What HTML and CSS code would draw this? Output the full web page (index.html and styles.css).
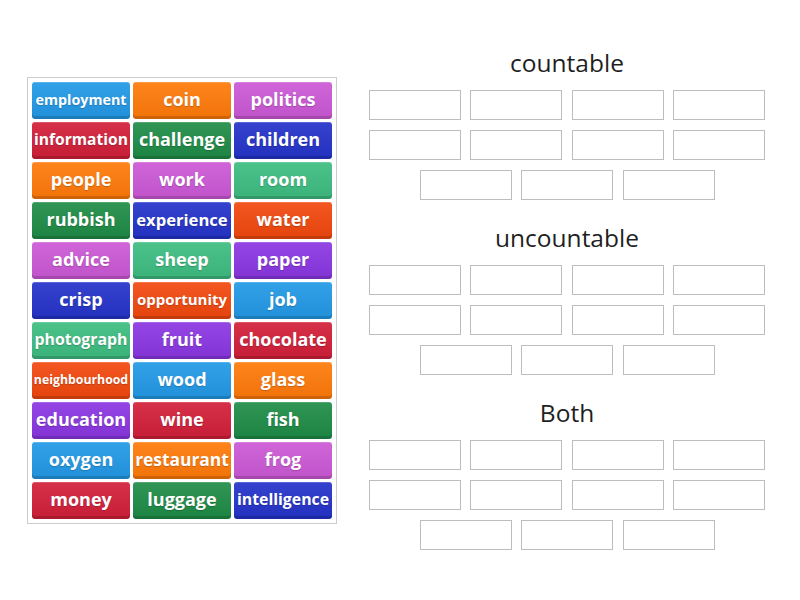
FILE: index.html
```html
<!DOCTYPE html>
<html>
<head>
<meta charset="utf-8">
<link rel="stylesheet" href="styles.css">
</head>
<body>
<div class="page">
  <div class="bank">
    <div class="tile blue s-employment">employment</div>
    <div class="tile orange">coin</div>
    <div class="tile magenta">politics</div>
    <div class="tile red s-information">information</div>
    <div class="tile green">challenge</div>
    <div class="tile dkblue">children</div>
    <div class="tile orange">people</div>
    <div class="tile magenta">work</div>
    <div class="tile teal">room</div>
    <div class="tile green">rubbish</div>
    <div class="tile dkblue s-experience">experience</div>
    <div class="tile orangered">water</div>
    <div class="tile magenta">advice</div>
    <div class="tile teal">sheep</div>
    <div class="tile violet">paper</div>
    <div class="tile dkblue">crisp</div>
    <div class="tile orangered s-opportunity">opportunity</div>
    <div class="tile blue">job</div>
    <div class="tile teal s-photograph">photograph</div>
    <div class="tile violet">fruit</div>
    <div class="tile red">chocolate</div>
    <div class="tile orangered s-neighbourhood">neighbourhood</div>
    <div class="tile blue">wood</div>
    <div class="tile orange">glass</div>
    <div class="tile violet">education</div>
    <div class="tile red">wine</div>
    <div class="tile green">fish</div>
    <div class="tile blue">oxygen</div>
    <div class="tile orange s-restaurant">restaurant</div>
    <div class="tile magenta">frog</div>
    <div class="tile red">money</div>
    <div class="tile green">luggage</div>
    <div class="tile dkblue s-intelligence">intelligence</div>
  </div>
  <div class="groups">
    <section class="group">
      <h2 class="title">countable</h2>
      <div class="row"><div class="slot"></div><div class="slot"></div><div class="slot"></div><div class="slot"></div></div>
      <div class="row"><div class="slot"></div><div class="slot"></div><div class="slot"></div><div class="slot"></div></div>
      <div class="row short"><div class="slot"></div><div class="slot"></div><div class="slot"></div></div>
    </section>
    <section class="group">
      <h2 class="title">uncountable</h2>
      <div class="row"><div class="slot"></div><div class="slot"></div><div class="slot"></div><div class="slot"></div></div>
      <div class="row"><div class="slot"></div><div class="slot"></div><div class="slot"></div><div class="slot"></div></div>
      <div class="row short"><div class="slot"></div><div class="slot"></div><div class="slot"></div></div>
    </section>
    <section class="group">
      <h2 class="title">Both</h2>
      <div class="row"><div class="slot"></div><div class="slot"></div><div class="slot"></div><div class="slot"></div></div>
      <div class="row"><div class="slot"></div><div class="slot"></div><div class="slot"></div><div class="slot"></div></div>
      <div class="row short"><div class="slot"></div><div class="slot"></div><div class="slot"></div></div>
    </section>
  </div>
</div>
</body>
</html>
```

FILE: styles.css
```css
html, body {
  margin: 0;
  padding: 0;
  background: #ffffff;
  font-family: "Open Sans", "Liberation Sans", sans-serif;
}

.page {
  display: flex;
  align-items: flex-start;
  padding-left: 27px;
}

.bank {
  margin-top: 77px;
  border: 1px solid #cccccc;
  padding: 4px;
  display: grid;
  grid-template-columns: repeat(3, 98px);
  grid-auto-rows: 36.8px;
  column-gap: 3px;
  row-gap: 3.2px;
}

.tile {
  border-radius: 3px;
  color: #ffffff;
  font-weight: 700;
  font-size: 18px;
  display: flex;
  align-items: center;
  justify-content: center;
  white-space: nowrap;
  letter-spacing: 0;
  text-shadow: 0 1px 1px rgba(0, 0, 0, 0.2);
  box-shadow: inset 0 -3px 0 rgba(0, 0, 0, 0.14), inset 0 1px 0 rgba(255, 255, 255, 0.18);
  background-image: linear-gradient(to bottom, rgba(255, 255, 255, 0.08), rgba(0, 0, 0, 0.06));
  padding-bottom: 2px;
  box-sizing: border-box;
}

.s-employment { font-size: 14.3px; }
.s-information { font-size: 15.6px; }
.s-experience { font-size: 16.6px; }
.s-opportunity { font-size: 15px; }
.s-photograph { font-size: 15.8px; }
.s-neighbourhood { font-size: 12.3px; }
.s-restaurant { font-size: 17.4px; }
.s-intelligence { font-size: 15.8px; }

.blue { background-color: #2299e6; }
.orange { background-color: #ff7a0a; }
.magenta { background-color: #cc58d6; }
.red { background-color: #d31f3a; }
.green { background-color: #1e8c46; }
.dkblue { background-color: #2433ca; }
.teal { background-color: #3dbd81; }
.orangered { background-color: #f2480e; }
.violet { background-color: #8b36e2; }

.groups {
  margin-top: 48px;
  margin-left: 32px;
  width: 396px;
  display: flex;
  flex-direction: column;
  gap: 23px;
}

.group {
  display: flex;
  flex-direction: column;
  gap: 10px;
}

.title {
  margin: 0 0 2px 0;
  font-weight: 400;
  font-size: 24.5px;
  line-height: 30px;
  height: 30px;
  text-align: center;
  color: #1f1f1f;
}

.row {
  display: flex;
  justify-content: space-between;
}

.row.short {
  justify-content: center;
  gap: 9.5px;
}

.slot {
  width: 92px;
  height: 30px;
  box-sizing: border-box;
  border: 1px solid #bdbdbd;
  background: #ffffff;
}
```
